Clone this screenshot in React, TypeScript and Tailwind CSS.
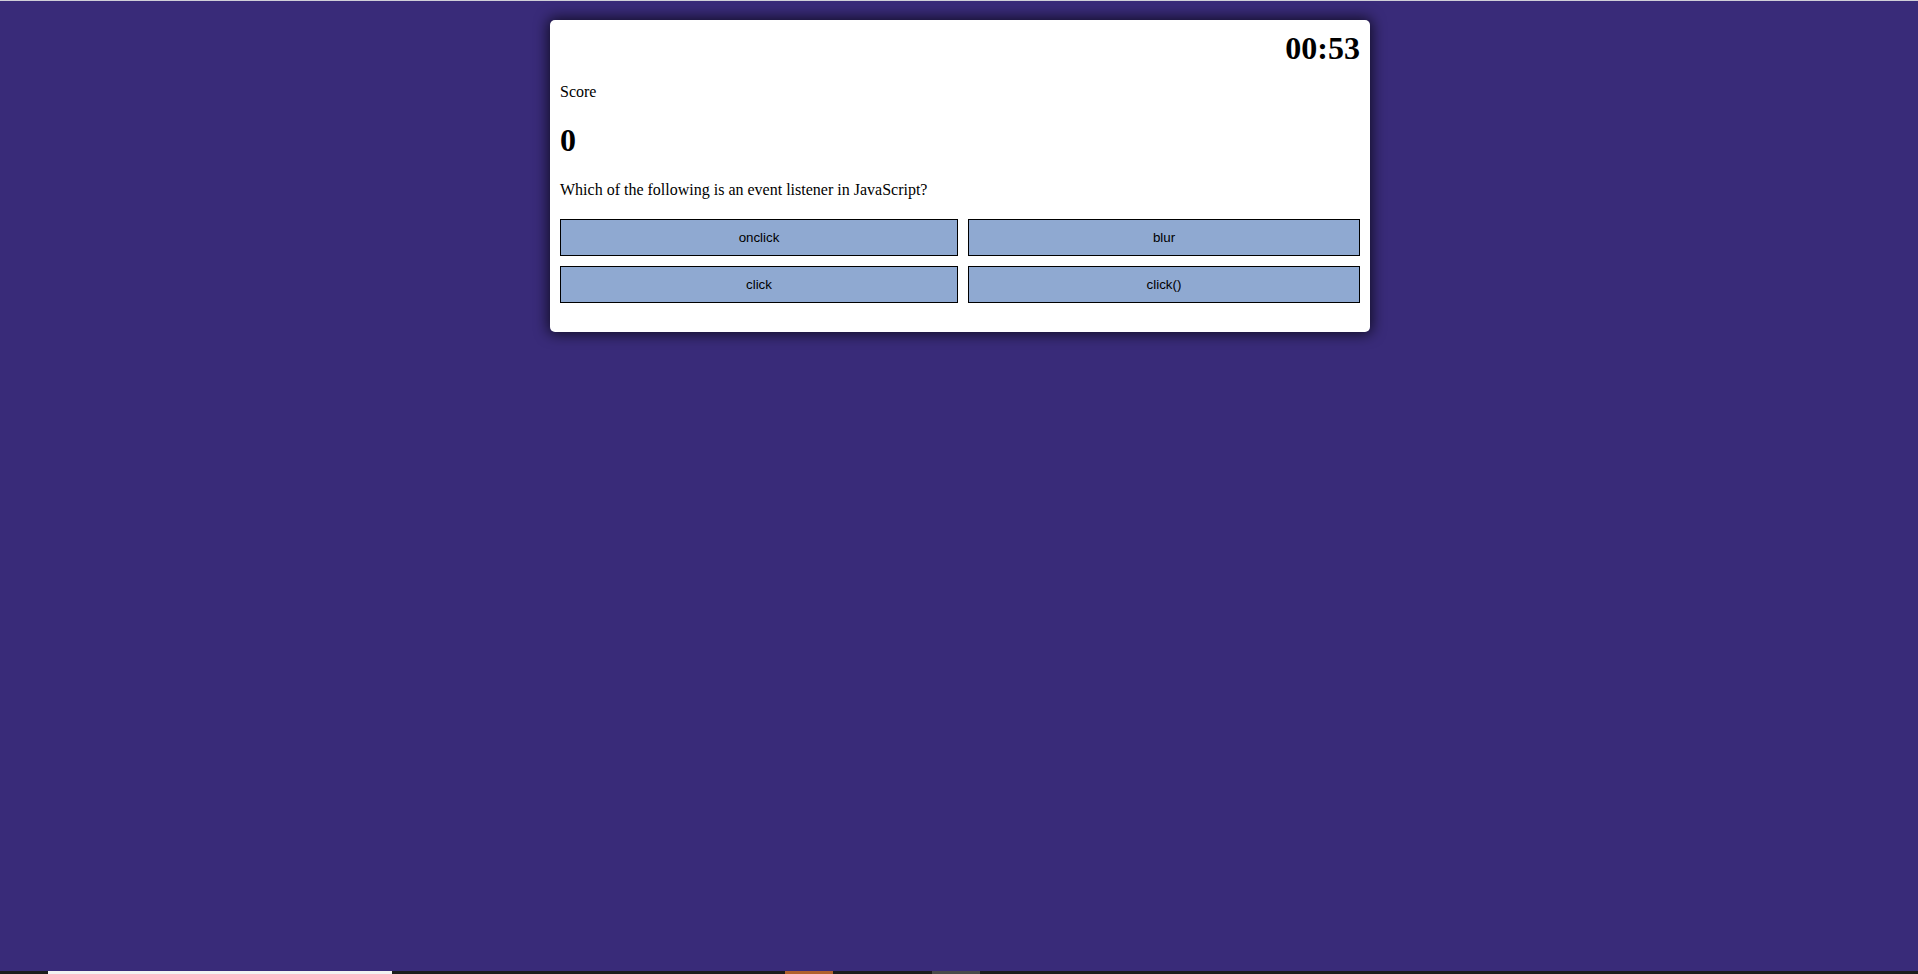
const answers = ["onclick", "blur", "click", "click()"];

function AnswerButton({ label }: { label: string }) {
  return (
    <button
      type="button"
      className="h-[37px] border border-black bg-[#8fa9d1] px-[10px] font-['Liberation_Sans',Arial,sans-serif] text-[13.33px] leading-[15px] text-black"
    >
      {label}
    </button>
  );
}

export default function App() {
  return (
    <div className="flex h-screen flex-col bg-[#392b79]">
      <div className="h-px bg-[#cfcfd8]" />
      <main className="flex flex-1 justify-center pt-[19px] pl-[2px]">
        <section className="h-fit w-[820px] rounded-[5px] bg-white px-[10px] pt-[10px] pb-[29px] font-['Liberation_Serif','Times_New_Roman',serif] text-black shadow-[0_0_14px_2px_rgba(0,0,0,0.7)]">
          <div className="text-right text-[32px] font-bold leading-[37px]">
            00:53
          </div>
          <p className="mt-4 text-base leading-[18px]">Score</p>
          <h1 className="mt-[21px] mb-[22px] text-[32px] font-bold leading-[37px]">
            0
          </h1>
          <p className="mb-[20px] text-base leading-[18px]">
            Which of the following is an event listener in JavaScript?
          </p>
          <div className="grid grid-cols-[398fr_392fr] gap-x-[10px] gap-y-[10px]">
            {answers.map((a) => (
              <AnswerButton key={a} label={a} />
            ))}
          </div>
        </section>
      </main>
      <div className="flex h-[3px] bg-[#1c1c1c]">
        <div className="ml-[48px] w-[344px] bg-[#f2f2f2]" />
        <div className="ml-[393px] w-[48px] bg-[#b0602c]" />
        <div className="ml-[99px] w-[48px] bg-[#4a4a4a]" />
      </div>
    </div>
  );
}
